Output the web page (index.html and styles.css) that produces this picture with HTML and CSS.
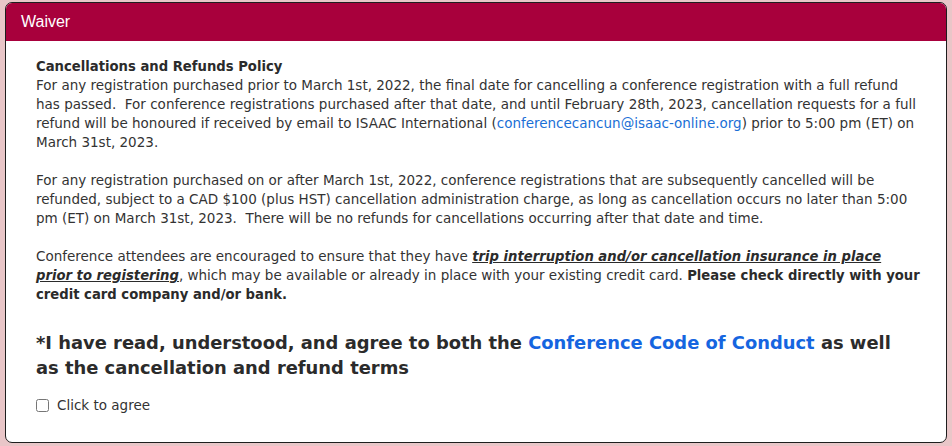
FILE: index.html
```html
<!DOCTYPE html>
<html>
<head>
<meta charset="utf-8">
<link rel="stylesheet" href="styles.css">
</head>
<body>
<div class="card">
  <div class="card-header">Waiver</div>
  <div class="card-body">
    <p class="policy"><strong>Cancellations and Refunds Policy</strong><br>For any registration purchased prior to March 1st, 2022, the final date for cancelling a conference registration with a full refund has passed.&nbsp; For conference registrations purchased after that date, and until February 28th, 2023, cancellation requests for a full refund will be honoured if received by email to ISAAC International (<a href="#" class="link">conferencecancun@isaac-online.org</a>) prior to 5:00 pm (ET) on March 31st, 2023.</p>
    <p class="policy">For any registration purchased on or after March 1st, 2022, conference registrations that are subsequently cancelled will be refunded, subject to a CAD $100 (plus HST) cancellation administration charge, as long as cancellation occurs no later than 5:00 pm (ET) on March 31st, 2023.&nbsp; There will be no refunds for cancellations occurring after that date and time.</p>
    <p class="policy">Conference attendees are encouraged to ensure that they have <strong><em><u>trip interruption and/or cancellation insurance in place prior to registering</u></em></strong>, which may be available or already in place with your existing credit card. <strong>Please check directly with your credit card company and/or bank.</strong></p>
    <h3 class="agree-title">*I have read, understood, and agree to both the <a href="#" class="title-link">Conference Code of Conduct</a> as well as the cancellation and refund terms</h3>
    <label class="agree"><input type="checkbox" class="agree-box"> Click to agree</label>
  </div>
</div>
</body>
</html>
```
FILE: styles.css
```css
html, body {
  margin: 0;
  padding: 0;
}
body {
  background: #e9c6c8;
  padding: 2px 5px 3px 5px;
  font-family: "DejaVu Sans", Verdana, sans-serif;
  color: #333;
}
.card {
  background: #fff;
  border: 1px solid #1e1e1e;
  border-radius: 7px;
  overflow: hidden;
  height: 441px;
  box-sizing: border-box;
}
.card-header {
  background: #a8003c;
  color: #fff;
  font-family: "Liberation Sans", Arial, sans-serif;
  font-size: 16px;
  height: 38px;
  line-height: 38px;
  padding-left: 15px;
}
.card-body {
  padding: 16px 26px 0 30px;
}
.policy {
  margin: 0 0 19px 0;
  font-size: 13.5px;
  line-height: 19px;
}
.policy strong {
  font-weight: bold;
  font-size: 13.2px;
  color: #2b2b2b;
}
.link {
  color: #1a6fd6;
  text-decoration: none;
}
.agree-title {
  margin: 26px 8px 0 0;
  font-size: 17.9px;
  line-height: 25px;
  font-weight: bold;
  color: #2b2b2b;
}
.title-link {
  color: #1565e0;
  text-decoration: none;
}
.agree {
  display: flex;
  align-items: center;
  gap: 8px;
  margin-top: 16px;
  font-size: 13.5px;
  line-height: 19px;
  color: #333;
}
.agree-box {
  margin: 0;
  width: 13px;
  height: 13px;
}
```
